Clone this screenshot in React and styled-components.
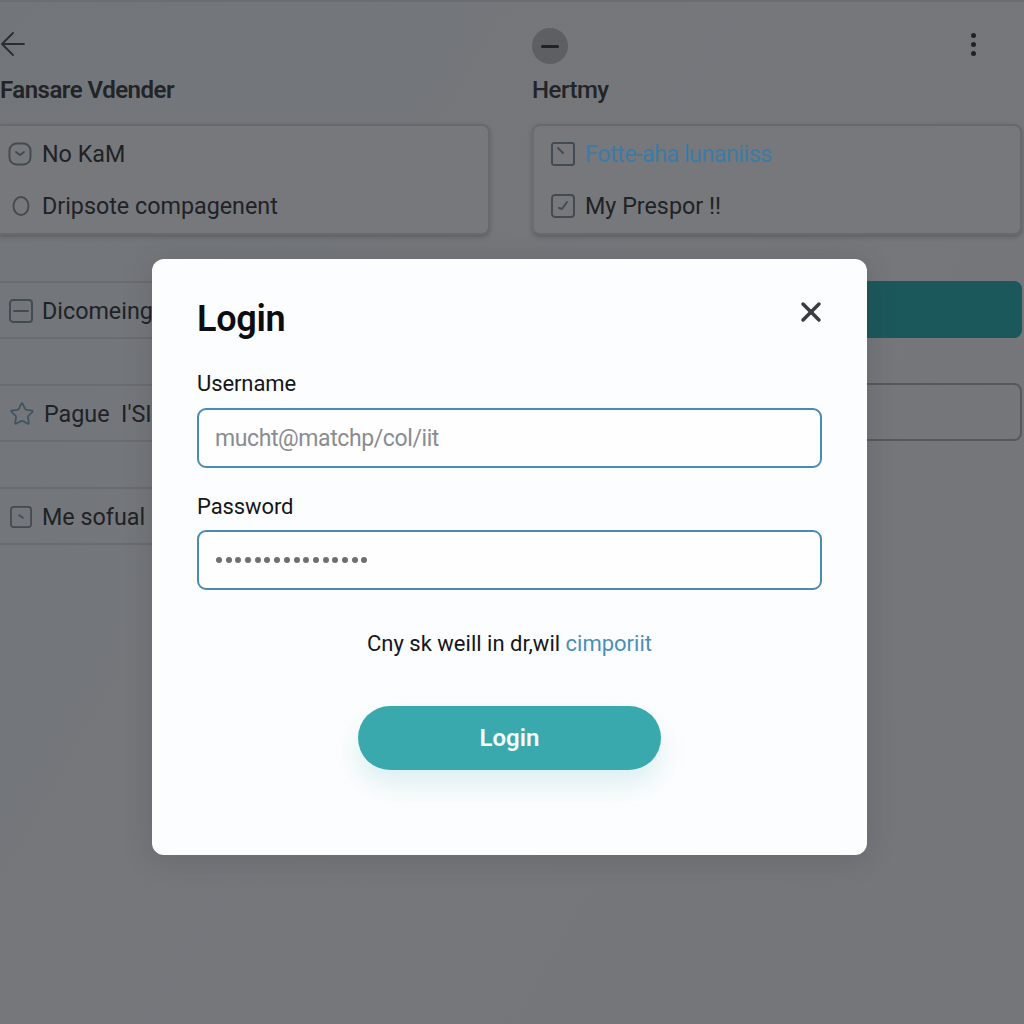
import React from 'react'
import styled, { createGlobalStyle } from 'styled-components'
import { X, Star } from 'lucide-react'

const Global = createGlobalStyle`
  html, body { margin: 0; padding: 0; }
  body { font-family: Roboto, "Liberation Sans", sans-serif; background: #75777b; }
  * { box-sizing: border-box; }
`

const Page = styled.div`
  position: relative;
  width: 1024px;
  height: 1024px;
  overflow: hidden;
  background: linear-gradient(120deg, #72767a 0%, #75777b 50%, #75767a 100%);
  border-top: 2px solid #6b6d71;
  padding: 26px 2px 0 0;
  display: grid;
  grid-template-columns: 490px 490px;
  column-gap: 42px;
  align-items: start;
  color: #202226;
`

const Column = styled.div`
  display: flex;
  flex-direction: column;
`

const TopBar = styled.div`
  height: 36px;
  display: flex;
  align-items: center;
  justify-content: space-between;
`

const BackIcon = styled.svg`
  width: 26px;
  height: 26px;
  margin-top: -4px;
  display: block;
  fill: none;
  stroke: #2b2d31;
  stroke-width: 1.8;
  stroke-linecap: round;
  stroke-linejoin: round;
`

const RoundMinus = styled.div`
  width: 36px;
  height: 36px;
  border-radius: 50%;
  background: #5d5f63;
  display: flex;
  align-items: center;
  justify-content: center;
  &::before {
    content: '';
    width: 18px;
    height: 3px;
    border-radius: 2px;
    background: #202226;
  }
`

const Kebab = styled.div`
  width: 6px;
  margin: -3px 45px 0 0;
  display: flex;
  flex-direction: column;
  gap: 4px;
  span {
    width: 5px;
    height: 5px;
    border-radius: 50%;
    background: #202226;
  }
`

const Heading = styled.h2`
  margin: 11px 0 0;
  height: 30px;
  font-size: 24px;
  line-height: 30px;
  font-weight: ${(p) => (p.$bold ? 600 : 500)};
  letter-spacing: -0.5px;
  color: #222428;
  white-space: nowrap;
`

const Card = styled.div`
  margin-top: 19px;
  height: 111px;
  padding: 2px 0 0;
  background: #76787c;
  border: 2px solid #67696d;
  border-left: ${(p) => (p.$flush ? 'none' : '2px solid #6b6d71')};
  border-radius: ${(p) => (p.$flush ? '0 8px 8px 0' : '8px')};
  box-shadow: 0 2px 4px rgba(50, 52, 56, 0.35);
  display: flex;
  flex-direction: column;
`

const CardRow = styled.div`
  height: 52px;
  display: flex;
  align-items: center;
  gap: ${(p) => p.$gap || 10}px;
  padding-left: ${(p) => p.$pad || 8}px;
  font-size: 23.3px;
  letter-spacing: ${(p) => p.$tight || 0}px;
  color: ${(p) => p.$color || '#202226'};
  white-space: nowrap;
`

const ListStack = styled.div`
  margin-top: 46px;
  display: flex;
  flex-direction: column;
  gap: 45px;
`

const ListRow = styled.div`
  height: 58px;
  padding-top: 2px;
  border-top: 2px solid #6a6c70;
  border-bottom: 2px solid #6a6c70;
  display: flex;
  align-items: center;
  gap: ${(p) => p.$gap || 9}px;
  padding-left: ${(p) => p.$pad || 9}px;
  font-size: 23.3px;
  white-space: pre;
`

const TealBar = styled.div`
  height: 57px;
  border-radius: 8px;
  background: #1b585c;
`

const OutlineBox = styled.div`
  height: 58px;
  border: 2px solid #56585c;
  border-radius: 8px;
`

const Glyph = styled.svg`
  width: ${(p) => p.$size || 24}px;
  height: ${(p) => p.$size || 24}px;
  flex: none;
  fill: none;
  stroke: #424a52;
  stroke-width: 1.9;
  stroke-linecap: round;
  stroke-linejoin: round;
`

const Modal = styled.div`
  position: absolute;
  left: 152px;
  top: 257px;
  width: 715px;
  height: 596px;
  padding: 38px 45px 0;
  border-radius: 12px;
  background: #fcfdfe;
  box-shadow: 0 4px 30px rgba(50, 52, 58, 0.2);
  color: #101114;
`

const ModalHead = styled.div`
  height: 44px;
  display: flex;
  align-items: center;
  justify-content: space-between;
  h1 {
    margin: 0;
    font-size: 36px;
    line-height: 44px;
    font-weight: 600;
    letter-spacing: -0.3px;
    color: #0c0d10;
  }
  svg {
    color: #3a3c40;
    margin-right: -5px;
    margin-top: -14px;
  }
`

const Label = styled.div`
  margin-top: ${(p) => p.$top}px;
  height: 28px;
  font-size: 22px;
  line-height: 28px;
  letter-spacing: -0.1px;
  color: #15161a;
`

const Field = styled.div`
  margin-top: ${(p) => p.$top}px;
  height: 60px;
  border: 2px solid #4a8bb0;
  border-radius: 9px;
  padding-left: 16px;
  display: flex;
  align-items: center;
  background: #fefefe;
  font-size: 23px;
  color: #8a8c90;
  letter-spacing: -0.4px;
`

const Dots = styled.div`
  display: flex;
  gap: 3.7px;
  padding-left: 1px;
  i {
    width: 6px;
    height: 6px;
    border-radius: 50%;
    background: #6c6e72;
  }
`

const Helper = styled.p`
  margin: 40px 0 0;
  text-align: center;
  font-size: 22px;
  line-height: 28px;
  color: #15161a;
  span {
    color: #4a8fb8;
  }
`

const LoginButton = styled.button`
  display: block;
  margin: 48px auto 0;
  width: 303px;
  height: 64px;
  border: none;
  border-radius: 32px;
  background: #3aa9ae;
  color: #f6fbfb;
  font-family: inherit;
  font-size: 24px;
  font-weight: 600;
  box-shadow: 0 14px 26px rgba(58, 169, 174, 0.16);
`

export default function App() {
  return (
    <>
      <Global />
      <Page>
        <Column>
          <TopBar>
            <BackIcon viewBox="0 0 26 26">
              <path d="M13 2 2 13l11 11" />
              <path d="M3 13h21" />
            </BackIcon>
          </TopBar>
          <Heading $bold>Fansare Vdender</Heading>
          <Card $flush>
            <CardRow>
              <Glyph viewBox="0 0 24 24">
                <rect x="1.5" y="1.5" width="21" height="21" rx="7" />
                <path d="m8 10 4 3 4-3" />
              </Glyph>
              No KaM
            </CardRow>
            <CardRow $pad={11} $gap={11}>
              <Glyph viewBox="0 0 20 20" $size={20}>
                <ellipse cx="10" cy="10" rx="7.5" ry="9" />
              </Glyph>
              Dripsote compagenent
            </CardRow>
          </Card>
          <ListStack>
            <ListRow>
              <Glyph viewBox="0 0 24 24">
                <rect x="1" y="1" width="22" height="22" rx="3" />
                <path d="M5 12h14" />
              </Glyph>
              Dicomeing
            </ListRow>
            <ListRow $gap={9}>
              <Star size={26} color="#44525f" strokeWidth={1.6} />
              {'Pague  I\'SI'}
            </ListRow>
            <ListRow $pad={10} $gap={10}>
              <Glyph viewBox="0 0 24 24" $size={22}>
                <rect x="1" y="1" width="22" height="22" rx="3" />
                <path d="m10 10 4 3" />
              </Glyph>
              Me sofual
            </ListRow>
          </ListStack>
        </Column>

        <Column>
          <TopBar>
            <RoundMinus />
            <Kebab>
              <span />
              <span />
              <span />
            </Kebab>
          </TopBar>
          <Heading>Hertmy</Heading>
          <Card>
            <CardRow $pad={17} $color="#3d7ba6" $tight={-0.5}>
              <Glyph viewBox="0 0 24 24">
                <rect x="1" y="1" width="22" height="22" rx="2" />
                <path d="m7 6 5 5" />
              </Glyph>
              Fotte-aha lunaniiss
            </CardRow>
            <CardRow $pad={17}>
              <Glyph viewBox="0 0 24 24">
                <rect x="1" y="1" width="22" height="22" rx="3" />
                <path d="m8 14 3 1 5-7" />
              </Glyph>
              My Prespor !!
            </CardRow>
          </Card>
          <ListStack>
            <TealBar />
            <OutlineBox />
          </ListStack>
        </Column>

        <Modal>
          <ModalHead>
            <h1>Login</h1>
            <X size={32} strokeWidth={2.6} />
          </ModalHead>
          <Label $top={29}>Username</Label>
          <Field $top={10}>mucht@matchp/col/iit</Field>
          <Label $top={25}>Password</Label>
          <Field $top={9}>
            <Dots>
              {Array.from({ length: 16 }).map((_, i) => (
                <i key={i} />
              ))}
            </Dots>
          </Field>
          <Helper>
            Cny sk weill in dr,wil <span>cimporiit</span>
          </Helper>
          <LoginButton>Login</LoginButton>
        </Modal>
      </Page>
    </>
  )
}
